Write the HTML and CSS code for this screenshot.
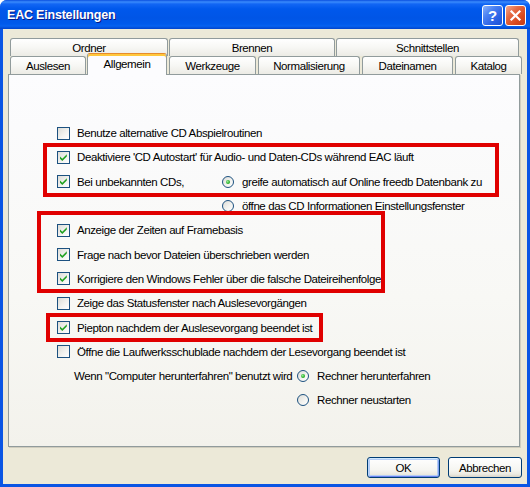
FILE: index.html
```html
<!DOCTYPE html>
<html>
<head>
<meta charset="utf-8">
<link rel="stylesheet" href="styles.css">
</head>
<body>
<div class="window">
  <div class="titlebar">
    <span class="title">EAC Einstellungen</span>
    <div class="tb-buttons">
      <div class="tb-btn help">?</div>
      <div class="tb-btn close">
        <svg width="13" height="13" viewBox="0 0 13 13"><path d="M2.5 2.5 L10.5 10.5 M10.5 2.5 L2.5 10.5" stroke="#fff" stroke-width="2.2" stroke-linecap="square"/></svg>
      </div>
    </div>
  </div>
  <div class="client">
    <div class="tabs">
      <div class="tabrow back">
        <div class="tab w-ordner">Ordner</div>
        <div class="tab w-brennen">Brennen</div>
        <div class="tab w-schnitt">Schnittstellen</div>
      </div>
      <div class="tabrow front">
        <div class="tab w-auslesen">Auslesen</div>
        <div class="tab selected w-allgemein">Allgemein</div>
        <div class="tab w-werkzeuge">Werkzeuge</div>
        <div class="tab w-normal">Normalisierung</div>
        <div class="tab w-dateinamen">Dateinamen</div>
        <div class="tab w-katalog">Katalog</div>
      </div>
    </div>
    <div class="panel">
      <div class="row"><span class="cb"></span><span>Benutze alternative CD Abspielroutinen</span></div>
      <div class="row"><span class="cb checked"><svg viewBox="0 0 13 13"><polygon points="3,5.5 5.3,7.8 9.8,3.3 9.8,5.6 5.3,10.1 3,7.8" fill="#21A121"/></svg></span><span>Deaktiviere 'CD Autostart' für Audio- und Daten-CDs während EAC läuft</span></div>
      <div class="row">
        <span class="split-label"><span class="cb checked"><svg viewBox="0 0 13 13"><polygon points="3,5.5 5.3,7.8 9.8,3.3 9.8,5.6 5.3,10.1 3,7.8" fill="#21A121"/></svg></span><span>Bei unbekannten CDs,</span></span>
        <span class="rb checked"></span><span>greife automatisch auf Online freedb Datenbank zu</span>
      </div>
      <div class="row indent-split"><span class="rb"></span><span>öffne das CD Informationen Einstellungsfenster</span></div>
      <div class="row"><span class="cb checked"><svg viewBox="0 0 13 13"><polygon points="3,5.5 5.3,7.8 9.8,3.3 9.8,5.6 5.3,10.1 3,7.8" fill="#21A121"/></svg></span><span>Anzeige der Zeiten auf Framebasis</span></div>
      <div class="row"><span class="cb checked"><svg viewBox="0 0 13 13"><polygon points="3,5.5 5.3,7.8 9.8,3.3 9.8,5.6 5.3,10.1 3,7.8" fill="#21A121"/></svg></span><span>Frage nach bevor Dateien überschrieben werden</span></div>
      <div class="row"><span class="cb checked"><svg viewBox="0 0 13 13"><polygon points="3,5.5 5.3,7.8 9.8,3.3 9.8,5.6 5.3,10.1 3,7.8" fill="#21A121"/></svg></span><span>Korrigiere den Windows Fehler über die falsche Dateireihenfolge</span></div>
      <div class="row"><span class="cb"></span><span>Zeige das Statusfenster nach Auslesevorgängen</span></div>
      <div class="row"><span class="cb checked"><svg viewBox="0 0 13 13"><polygon points="3,5.5 5.3,7.8 9.8,3.3 9.8,5.6 5.3,10.1 3,7.8" fill="#21A121"/></svg></span><span>Piepton nachdem der Auslesevorgang beendet ist</span></div>
      <div class="row"><span class="cb"></span><span>Öffne die Laufwerksschublade nachdem der Lesevorgang beendet ist</span></div>
      <div class="row">
        <span class="shutdown-label">Wenn "Computer herunterfahren" benutzt wird</span>
        <span class="rb checked"></span><span>Rechner herunterfahren</span>
      </div>
      <div class="row indent-shutdown"><span class="rb"></span><span>Rechner neustarten</span></div>
    </div>
    <div class="buttons">
      <div class="btn default">OK</div>
      <div class="btn">Abbrechen</div>
    </div>
  </div>
  <div class="mark m1"></div>
  <div class="mark m2"></div>
  <div class="mark m3"></div>
</div>
</body>
</html>
```
FILE: styles.css
```css
* { box-sizing: border-box; }
html, body { margin: 0; padding: 0; background: #ffffff; }
body { font-family: "Liberation Sans", Arial, sans-serif; }

.window {
  position: relative;
  width: 530px;
  height: 487px;
  display: flex;
  flex-direction: column;
  background: #0A55E4;
  border-radius: 7px 7px 0 0;
  overflow: hidden;
}

.titlebar {
  flex: none;
  height: 29px;
  display: flex;
  align-items: center;
  padding: 0 4px 0 7px;
  background: linear-gradient(180deg, #0A4FDF 0px, #3A8BFC 2px, #1266F4 4px, #0058EC 9px, #0055E6 18px, #005AEC 24px, #0762F0 26px, #0043CC 29px);
}

.title {
  flex: 1;
  color: #ffffff;
  font-weight: bold;
  font-size: 12.5px;
  letter-spacing: -0.2px;
  text-shadow: 1px 1px 0 #0A1883;
}

.tb-buttons { display: flex; gap: 2px; margin-top: 1px; }

.tb-btn {
  width: 21px;
  height: 21px;
  border: 1px solid #ffffff;
  border-radius: 3px;
  display: flex;
  align-items: center;
  justify-content: center;
  color: #ffffff;
  font-weight: bold;
  font-size: 15px;
}
.tb-btn.help { background: linear-gradient(135deg, #8AB2FB 0%, #4A80F2 35%, #2B61E4 70%, #1F52D4 100%); }
.tb-btn.close { background: linear-gradient(135deg, #F4A88E 0%, #E56A43 35%, #D8491E 70%, #C23D16 100%); }

.client {
  flex: 1;
  margin: 0 3px 3px 3px;
  background: #ECE9D8;
  padding: 9px 5px 0 5px;
  display: flex;
  flex-direction: column;
  font-size: 11.5px;
  letter-spacing: -0.4px;
  color: #000;
}

.tabs { display: flex; flex-direction: column; margin-left: 2px; }
.tabrow { display: flex; gap: 1px; height: 18px; align-items: flex-end; }

.tab {
  height: 18px;
  border: 1px solid #919B9C;
  border-bottom: none;
  border-radius: 3px 3px 0 0;
  background: linear-gradient(180deg, #FFFFFF 0%, #F7F7F4 50%, #ECEBE5 100%);
  display: flex;
  align-items: center;
  justify-content: center;
  padding-top: 1px;
}
.tab.selected {
  position: relative;
  z-index: 2;
  height: 22px;
  margin-bottom: -1px;
  background: #FCFCFE;
  border-top-color: #E68B2C;
  box-shadow: inset 0 2px 0 #FFC73C;
  padding-top: 0;
  padding-bottom: 2px;
}

.w-ordner { width: 158px; }
.w-brennen { width: 166px; }
.w-schnitt { width: 183px; }
.w-auslesen { width: 76px; }
.w-allgemein { width: 80px; margin-right: 1px; }
.w-werkzeuge { width: 87px; }
.w-normal { width: 102px; margin-left: 1px; }
.w-dateinamen { width: 91px; margin-left: 1px; }
.w-katalog { width: 67px; margin-left: 1px; }

.panel {
  width: 512px;
  height: 373px;
  flex: none;
  border: 1px solid #919B9C;
  background: linear-gradient(180deg, #FCFCFE 0%, #F8F8F5 60%, #F3F2EC 100%);
  box-shadow: 1px 1px 0 #D0CDBE;
  padding: 46px 0 0 48px;
  display: flex;
  flex-direction: column;
}

.row {
  height: 24.3px;
  display: flex;
  align-items: center;
  white-space: nowrap;
}

.cb {
  flex: none;
  width: 13px;
  height: 13px;
  border: 1px solid #1C5180;
  background: linear-gradient(135deg, #DCDCD7 0%, #F2F2EF 55%, #FFFFFF 100%);
  margin-right: 7px;
  position: relative;
}
.cb svg { position: absolute; left: -1px; top: -1px; width: 13px; height: 13px; }

.rb {
  flex: none;
  width: 12px;
  height: 12px;
  border: 1px solid #1C5180;
  border-radius: 50%;
  background: linear-gradient(135deg, #DCDCD7 0%, #F4F4F1 60%, #FFFFFF 100%);
  margin-right: 8px;
  position: relative;
}
.rb.checked::after {
  content: "";
  position: absolute;
  left: 3px;
  top: 3px;
  width: 4px;
  height: 4px;
  border-radius: 50%;
  background: radial-gradient(circle at 40% 40%, #9CEB9C 0%, #2DB52D 55%, #1A8A1A 100%);
}

.split-label { display: flex; align-items: center; width: 165px; flex: none; }
.indent-split { padding-left: 165px; }
.shutdown-label { width: 223px; margin-left: 17px; flex: none; }
.indent-shutdown { padding-left: 240px; }

.buttons {
  display: flex;
  justify-content: flex-end;
  gap: 8px;
  margin-top: 10px;
}
.btn {
  width: 74px;
  height: 21px;
  border: 1px solid #003C74;
  border-radius: 3px;
  background: linear-gradient(180deg, #FFFFFF 0%, #F6F6F2 60%, #ECEAE2 85%, #D8D3C6 100%);
  display: flex;
  align-items: center;
  justify-content: center;
}
.btn.default {
  width: 73px;
  box-shadow: inset 0 1px 0 #CEE7FF, inset 1px 0 0 #B8D4FB, inset -1px 0 0 #7E9FF0, inset 0 -1px 0 #6982EE, inset 0 0 0 2px #B4CDF6;
}

.mark {
  position: absolute;
  border: 4px solid #E00000;
}
.m1 { left: 43px; top: 143px; width: 456px; height: 54px; }
.m2 { left: 37px; top: 211px; width: 348px; height: 82px; }
.m3 { left: 46px; top: 313px; width: 277px; height: 29px; }
```
